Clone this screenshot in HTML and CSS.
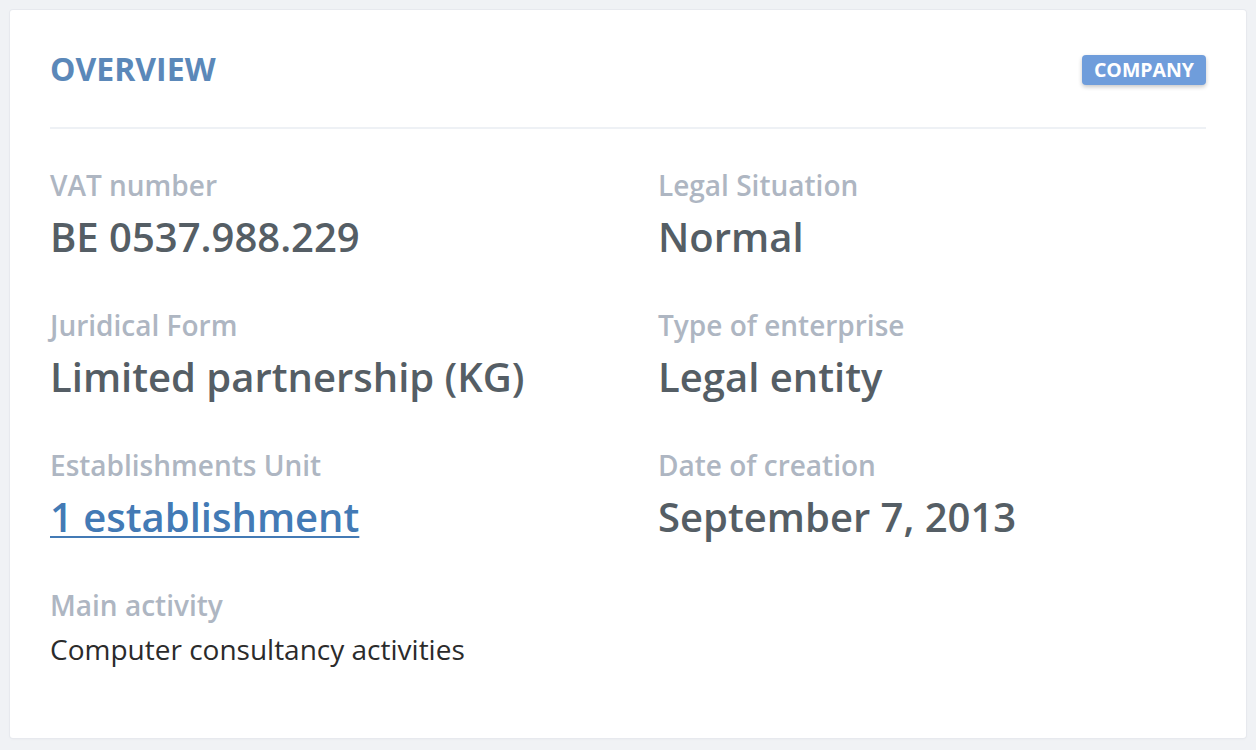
FILE: index.html
```html
<!DOCTYPE html>
<html>
<head>
<meta charset="utf-8">
<link rel="stylesheet" href="styles.css">
</head>
<body>
<div class="card">
  <div class="card-header">
    <h2 class="title">OVERVIEW</h2>
    <span class="badge">COMPANY</span>
  </div>
  <div class="grid">
    <div class="field">
      <div class="label">VAT number</div>
      <div class="value">BE 0537.988.229</div>
    </div>
    <div class="field">
      <div class="label">Legal Situation</div>
      <div class="value">Normal</div>
    </div>
    <div class="field">
      <div class="label">Juridical Form</div>
      <div class="value">Limited partnership (KG)</div>
    </div>
    <div class="field">
      <div class="label">Type of enterprise</div>
      <div class="value">Legal entity</div>
    </div>
    <div class="field">
      <div class="label">Establishments Unit</div>
      <div class="value"><a class="link" href="#">1 establishment</a></div>
    </div>
    <div class="field">
      <div class="label">Date of creation</div>
      <div class="value">September 7, 2013</div>
    </div>
    <div class="field">
      <div class="label">Main activity</div>
      <div class="text">Computer consultancy activities</div>
    </div>
  </div>
</div>
</body>
</html>
```

FILE: styles.css
```css
* { box-sizing: border-box; }
html, body { margin: 0; }
body {
  background: #f0f2f5;
  padding: 10px;
  font-family: "Open Sans", "Noto Sans", sans-serif;
}
.card {
  width: 1236px;
  height: 728px;
  background: #fff;
  border-radius: 3px;
  box-shadow: 0 0 0 1px #e7e9ee, 0 1px 3px rgba(0,0,0,0.05);
  padding: 0 40px;
}
.card-header {
  height: 119px;
  display: flex;
  align-items: center;
  justify-content: space-between;
  border-bottom: 2px solid #eef1f5;
}
.title {
  margin: 0;
  font-size: 32px;
  line-height: 32px;
  font-weight: 700;
  color: #5b88b9;
}
.badge {
  display: inline-block;
  height: 30px;
  line-height: 30px;
  padding: 0 12px;
  background: #6f9ddb;
  color: #fff;
  font-size: 19.5px;
  font-weight: 700;
  border-radius: 4px;
  box-shadow: 0 2px 4px rgba(0,0,0,0.22);
  margin-top: 2px;
}
.grid {
  display: grid;
  grid-template-columns: 608px 1fr;
  row-gap: 45px;
  padding-top: 38px;
}
.label {
  font-size: 28px;
  line-height: 36px;
  font-weight: 600;
  color: #aeb6c2;
}
.value {
  margin-top: 9px;
  font-size: 40px;
  line-height: 50px;
  font-weight: 600;
  color: #555e65;
}
.link {
  color: #437ab5;
  text-decoration: underline;
  text-decoration-thickness: 2px;
  text-underline-offset: 4px;
}
.text {
  margin-top: 8px;
  font-size: 28px;
  line-height: 36px;
  color: #2b2b2b;
}
```
